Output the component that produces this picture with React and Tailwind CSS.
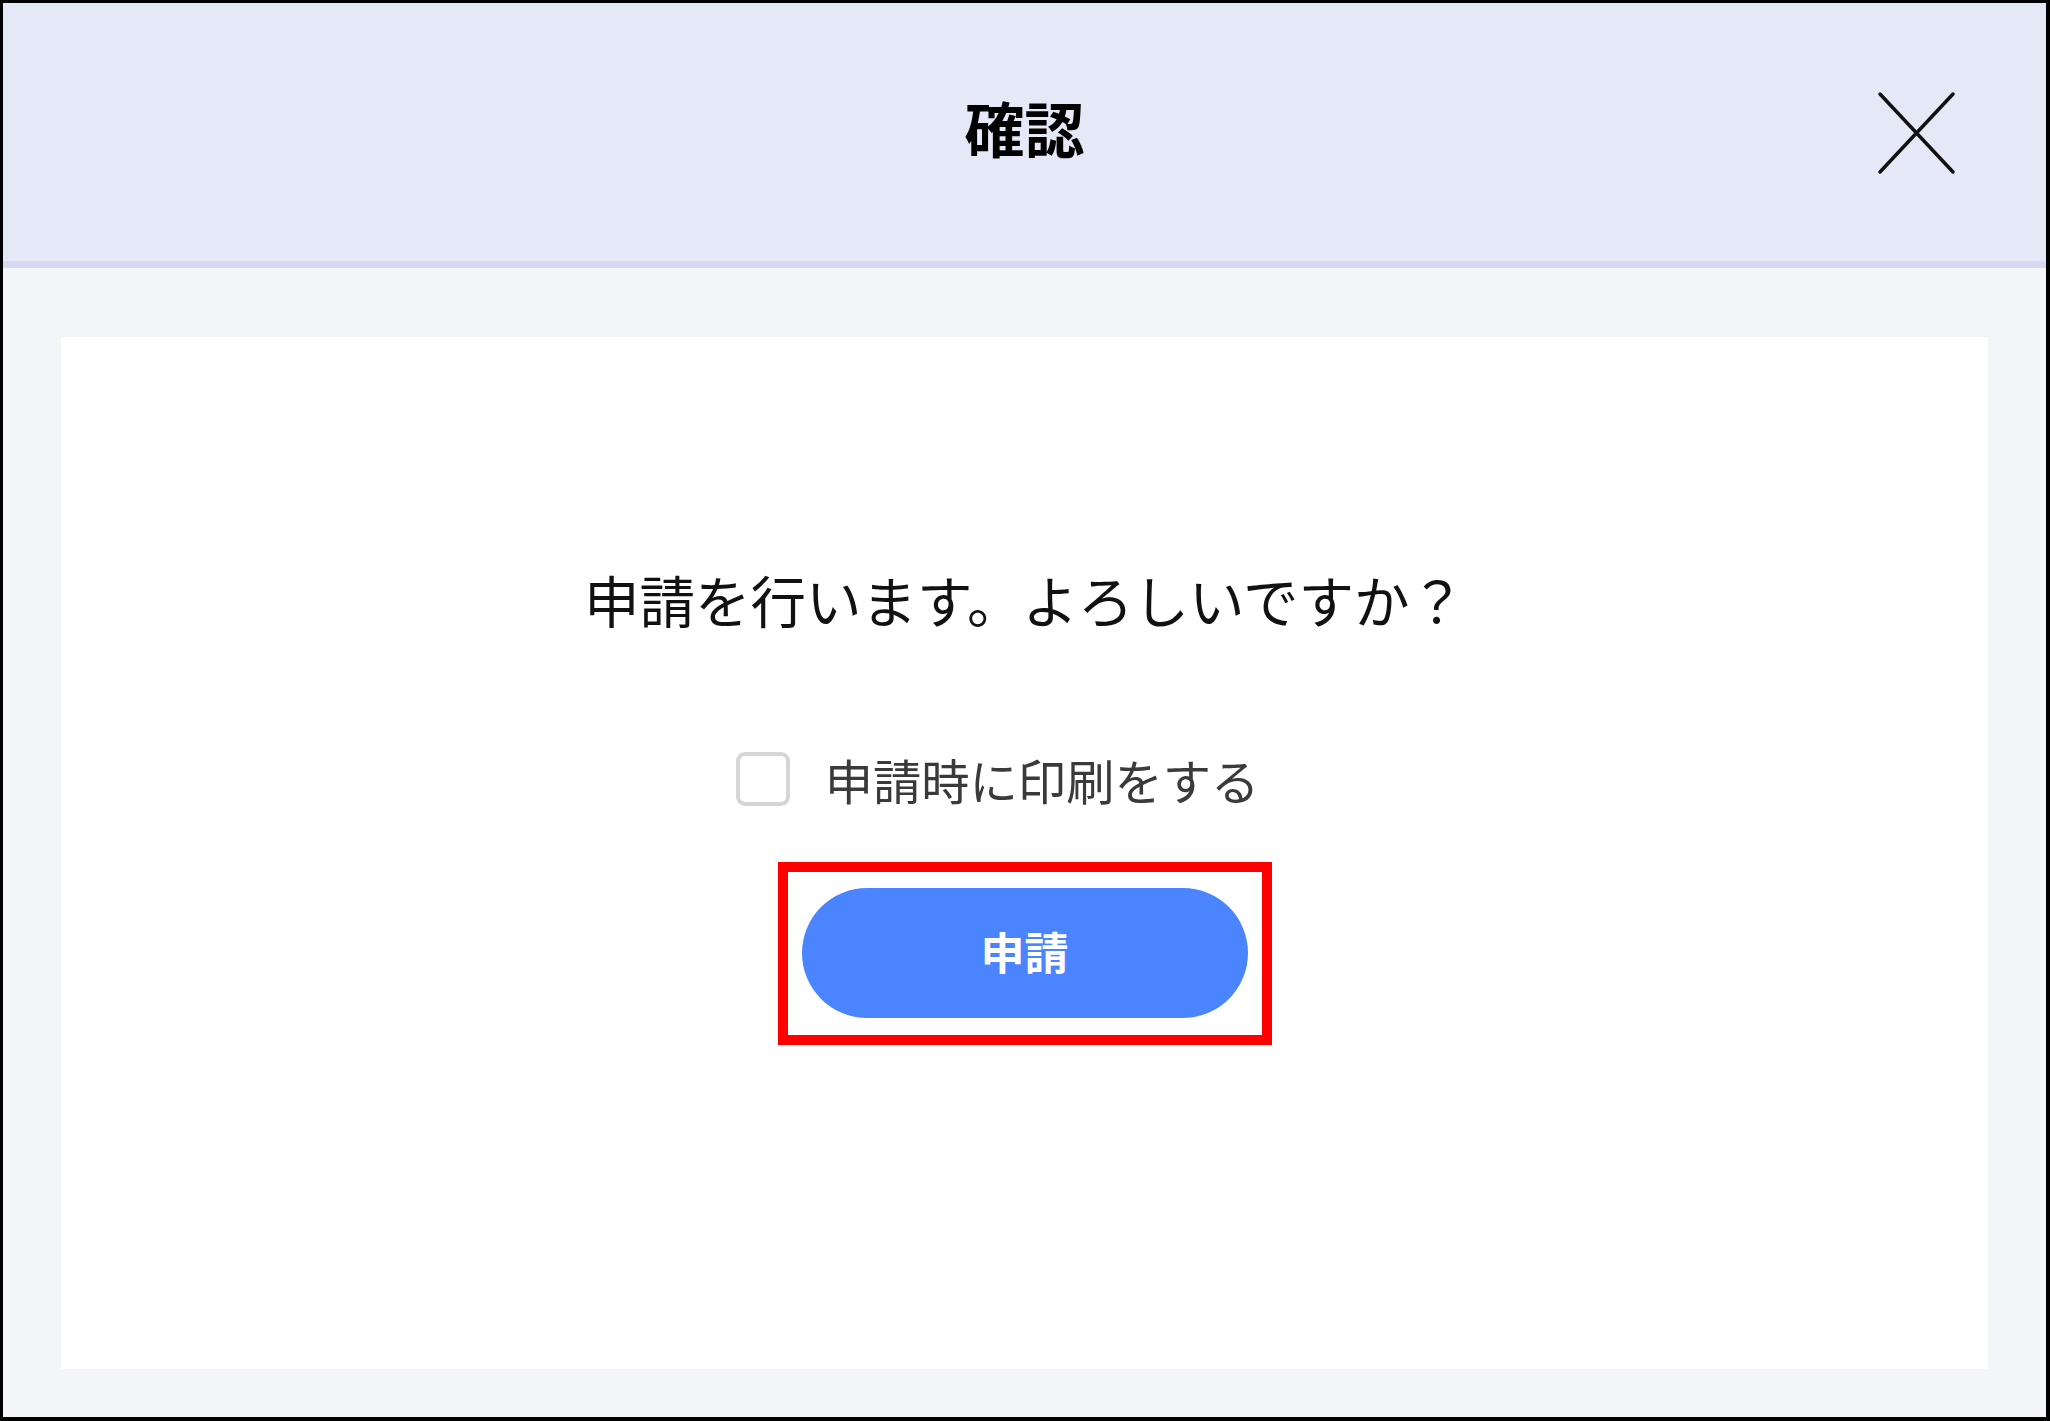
export default function App() {
  const font = { fontFamily: '"Noto Sans CJK JP", "Noto Sans", sans-serif' };

  return (
    <div
      style={font}
      className="w-[2050px] h-[1421px] flex flex-col border-l-[3px] border-t-[3px] border-r-4 border-b-4 border-black bg-[#f4f5f9]"
    >
      {/* header */}
      <div className="relative h-[265px] shrink-0 flex items-center justify-center pb-[10px] bg-[#e5e8f7] border-b-[7px] border-[#d6d9f1]">
        <h1 className="text-[60px] font-bold leading-none text-black">確認</h1>
        <button className="absolute right-[89px] top-[88px] w-[80px] h-[84px] flex items-center justify-center">
          <svg viewBox="0 0 80 84" className="w-[80px] h-[84px]" fill="none" stroke="#111" strokeWidth="3.5" strokeLinecap="round">
            <line x1="3" y1="3" x2="76" y2="81" />
            <line x1="76" y1="3" x2="3" y2="81" />
          </svg>
        </button>
      </div>

      {/* body */}
      <div className="flex-1 flex px-[58px] pt-[69px] pb-[48px]">
        <div className="flex-1 bg-white flex flex-col items-center pt-[222px]">
          <p className="text-[55.5px] leading-[81px] text-[#111]">申請を行います。よろしいですか？</p>

          <label className="mt-[112px] mr-[54px] flex items-center gap-[35px] cursor-pointer">
            <span className="w-[54px] h-[54px] rounded-[9px] border-[4px] border-[#d6d6d6] bg-white" />
            <span className="text-[48.3px] leading-[54px] text-[#3a3a3a]">申請時に印刷をする</span>
          </label>

          <div className="mt-[56px] border-[10px] border-[#ff0000] px-[14px] pt-[16px] pb-[17px]">
            <button className="w-[446px] h-[130px] rounded-full bg-[#4a84ff] text-white text-[44px] font-bold leading-none pb-[4px]">
              申請
            </button>
          </div>
        </div>
      </div>
    </div>
  );
}
